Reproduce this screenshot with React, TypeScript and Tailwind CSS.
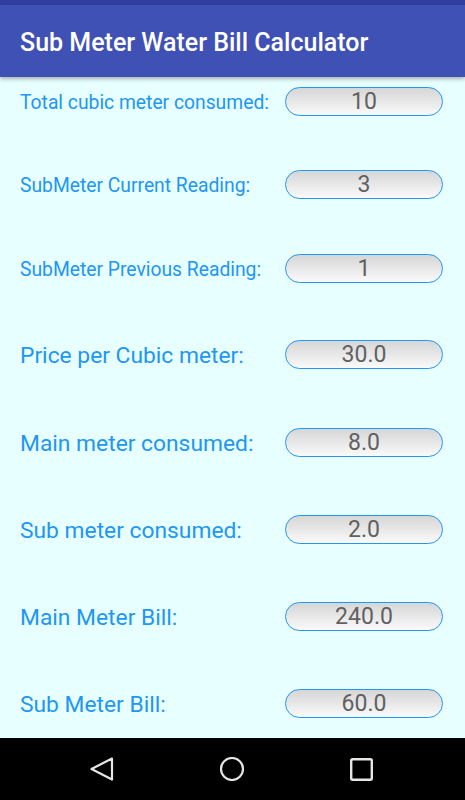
import React from 'react';

interface Row {
  label: string;
  value: string;
  small?: boolean;
  mt: string;
}

const rows: Row[] = [
  { label: 'Total cubic meter consumed:', value: '10', small: true, mt: 'mt-[10px]' },
  { label: 'SubMeter Current Reading:', value: '3', small: true, mt: 'mt-[54px]' },
  { label: 'SubMeter Previous Reading:', value: '1', small: true, mt: 'mt-[55px]' },
  { label: 'Price per Cubic meter:', value: '30.0', mt: 'mt-[57px]' },
  { label: 'Main meter consumed:', value: '8.0', mt: 'mt-[59px]' },
  { label: 'Sub meter consumed:', value: '2.0', mt: 'mt-[58px]' },
  { label: 'Main Meter Bill:', value: '240.0', mt: 'mt-[58px]' },
  { label: 'Sub Meter Bill:', value: '60.0', mt: 'mt-[58px]' },
];

const App: React.FC = () => {
  return (
    <div className="w-[465px] h-[800px] flex flex-col bg-[#e8ffff] font-['Roboto',sans-serif] overflow-hidden">
      {/* status bar */}
      <div className="h-[5px] bg-[#303f9f]" />
      {/* toolbar */}
      <div className="h-[72px] bg-[#3f51b5] flex items-center px-5 pt-[3px] shadow-[0_2px_4px_rgba(0,0,0,0.3)] z-10">
        <h1 className="text-white text-[25px] font-medium whitespace-nowrap">Sub Meter Water Bill Calculator</h1>
      </div>

      {/* form */}
      <div className="flex-1 flex flex-col">
        {rows.map((row) => (
          <div key={row.label} className={`${row.mt} flex items-center h-[29px] pl-5 pr-[22px]`}>
            <span
              className={`flex-1 whitespace-nowrap pt-[4px] text-[#2196f3] ${row.small ? 'text-[19.3px]' : 'text-[22.8px]'}`}
            >
              {row.label}
            </span>
            <div className="w-[158px] h-[29px] shrink-0 rounded-full border border-[#2196f3] bg-gradient-to-b from-[#d6d6d6] to-[#fafafa] flex items-center justify-center pt-[2px] text-[23px] text-[#616161]">
              {row.value}
            </div>
          </div>
        ))}
      </div>

      {/* nav bar */}
      <div className="h-[62px] bg-black flex items-center pl-[90px] gap-[106px]">
        <svg width="24" height="24" viewBox="0 0 24 24">
          <path d="M22 1.5 L1.5 12 L22 22.5 Z" fill="none" stroke="#e6e6e6" strokeWidth="2.2" strokeLinejoin="round" />
        </svg>
        <svg width="24" height="24" viewBox="0 0 24 24">
          <circle cx="12" cy="12" r="11" fill="none" stroke="#e6e6e6" strokeWidth="2.2" />
        </svg>
        <svg width="23" height="23" viewBox="0 0 23 23">
          <rect x="1.2" y="1.2" width="20.6" height="20.6" rx="1.5" fill="none" stroke="#e6e6e6" strokeWidth="2.4" />
        </svg>
      </div>
    </div>
  );
};

export default App;
